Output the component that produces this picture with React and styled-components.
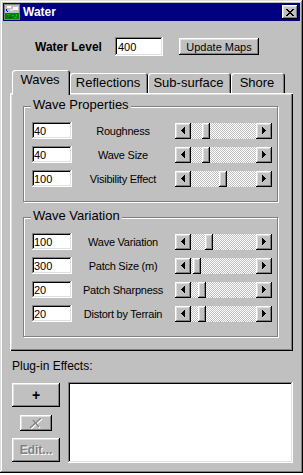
import React from 'react';
import styled, { createGlobalStyle } from 'styled-components';

const GlobalStyle = createGlobalStyle`
  html, body { margin: 0; padding: 0; background: #ffffff; }
  body { font-family: "Liberation Sans", Arial, sans-serif; color: #000; }
  * { box-sizing: border-box; }
`;

const raisedShadow = 'inset -1px -1px #000000, inset 1px 1px #ffffff, inset -2px -2px #808080, inset 2px 2px #dfdfdf';
const sunkenShadow = 'inset -1px -1px #ffffff, inset 1px 1px #808080, inset -2px -2px #dfdfdf, inset 2px 2px #000000';

const Window = styled.div`
  width: 303px;
  height: 473px;
  background: #c0c0c0;
  padding: 3px;
  box-shadow: inset -1px -1px #000000, inset 1px 1px #dfdfdf, inset -2px -2px #808080, inset 2px 2px #ffffff;
  display: flex;
  flex-direction: column;
`;

const TitleBar = styled.div`
  height: 18px;
  background: #000080;
  display: flex;
  align-items: center;
  padding: 0 2px 0 1px;
`;

const TitleText = styled.span`
  margin-left: 3px;
  color: #ffffff;
  font-weight: bold;
  font-size: 12px;
  line-height: 14px;
`;

const CloseButton = styled.button`
  margin-left: auto;
  width: 16px;
  height: 14px;
  padding: 0;
  border: none;
  background: #c0c0c0;
  box-shadow: ${raisedShadow};
  display: flex;
  align-items: center;
  justify-content: center;
`;

const Body = styled.div`
  display: flex;
  flex-direction: column;
  flex: 1;
`;

const WaterRow = styled.div`
  margin-top: 16px;
  height: 19px;
  display: flex;
  align-items: center;
  padding-left: 32px;
`;

const BoldLabel = styled.span`
  width: 80px;
  font-weight: bold;
  font-size: 12px;
`;

const Field = styled.input`
  width: ${p => p.$w}px;
  height: ${p => p.$h}px;
  border: none;
  outline: none;
  margin: 0;
  background: #ffffff;
  box-shadow: ${sunkenShadow};
  font-family: "Liberation Sans", Arial, sans-serif;
  font-size: 11px;
  padding: 0 0 0 ${p => p.$pl}px;
  color: #000;
`;

const PushButton = styled.button`
  width: ${p => p.$w}px;
  height: ${p => p.$h}px;
  margin: 0;
  padding: 0;
  border: none;
  background: #c0c0c0;
  box-shadow: ${raisedShadow};
  font-family: "Liberation Sans", Arial, sans-serif;
  font-size: ${p => p.$fs || 11}px;
  font-weight: ${p => (p.$bold ? 'bold' : 'normal')};
  color: ${p => (p.$disabled ? '#808080' : '#000')};
  text-shadow: ${p => (p.$disabled ? '1px 1px 0 #ffffff' : 'none')};
  display: flex;
  align-items: center;
  justify-content: center;
`;

const UpdateButton = styled(PushButton)`
  margin-left: 16px;
`;

const TabArea = styled.div`
  margin: 14px 7px 0 7px;
  display: flex;
  flex-direction: column;
`;

const TabStrip = styled.div`
  display: flex;
  align-items: flex-end;
  height: 23px;
  padding-left: 2px;
`;

const Tab = styled.div`
  width: ${p => p.$w}px;
  height: ${p => (p.$active ? 25 : 20)}px;
  margin-bottom: ${p => (p.$active ? -2 : 0)}px;
  position: relative;
  z-index: ${p => (p.$active ? 2 : 0)};
  background: #c0c0c0;
  border-radius: 3px 3px 0 0;
  box-shadow: inset 1px 1px #ffffff, inset -1px 0 #000000, inset -2px 0 #808080;
  font-size: 13px;
  line-height: 20px;
  text-align: center;
  padding-right: 2px;
`;

const Panel = styled.div`
  height: 258px;
  background: #c0c0c0;
  box-shadow: inset 1px 1px #ffffff, inset -1px -1px #000000, inset -2px -2px #808080, inset 2px 2px #dfdfdf;
  padding: 13px 15px 0 13px;
  display: flex;
  flex-direction: column;
  gap: 15px;
`;

const Group = styled.div`
  position: relative;
  border: 1px solid #808080;
  box-shadow: inset 1px 1px #ffffff, 1px 1px 0 #ffffff;
  padding: 15px 0 14px 8px;
  display: flex;
  flex-direction: column;
  gap: 7px;
`;

const Legend = styled.span`
  position: absolute;
  top: -10px;
  left: 7px;
  padding: 0 2px;
  background: #c0c0c0;
  font-size: 13px;
  line-height: 15px;
`;

const Row = styled.div`
  display: flex;
  align-items: center;
  height: 17px;
`;

const RowLabel = styled.span`
  width: 102px;
  text-align: center;
  font-size: 11px;
  letter-spacing: -0.25px;
  white-space: nowrap;
`;

const ScrollBar = styled.div`
  width: 97px;
  height: 16px;
  margin-left: 1px;
  display: flex;
`;

const ArrowButton = styled.div`
  width: 16px;
  height: 16px;
  background: #c0c0c0;
  box-shadow: ${raisedShadow};
  display: flex;
  align-items: center;
  justify-content: center;
`;

const Track = styled.div`
  flex: 1;
  height: 16px;
  display: flex;
  background: repeating-conic-gradient(#ffffff 0 25%, #c0c0c0 0 50%) 0 0 / 2px 2px;
`;

const Thumb = styled.div`
  width: 8px;
  height: 16px;
  margin-left: ${p => p.$offset}px;
  background: #c0c0c0;
  box-shadow: ${raisedShadow};
`;

const PluginLabel = styled.div`
  margin: 8px 0 0 9px;
  font-size: 12px;
  line-height: 14px;
`;

const BottomRow = styled.div`
  margin: 9px 0 0 9px;
  height: 81px;
  display: flex;
`;

const ButtonColumn = styled.div`
  width: 48px;
  padding-top: 1px;
  display: flex;
  flex-direction: column;
  align-items: center;
`;

const SmallButton = styled(PushButton)`
  margin: 8px 0 7px 0;
`;

const ListBox = styled.div`
  margin-left: 8px;
  width: 225px;
  height: 81px;
  background: #ffffff;
  box-shadow: ${sunkenShadow};
`;

const WaterIcon = () => (
  <svg width="16" height="16" viewBox="0 0 16 16" shapeRendering="crispEdges">
    <rect x="0" y="0" width="16" height="16" fill="#808080" />
    <rect x="1" y="1" width="14" height="8" fill="#c0c0c0" />
    <rect x="3" y="2" width="4" height="2" fill="#ffffff" />
    <rect x="9" y="3" width="5" height="3" fill="#ffffff" />
    <rect x="6" y="5" width="3" height="2" fill="#e0e0e0" />
    <rect x="1" y="9" width="14" height="6" fill="#008000" />
    <rect x="3" y="10" width="2" height="1" fill="#00c000" />
    <rect x="8" y="11" width="2" height="1" fill="#00c000" />
    <rect x="12" y="10" width="1" height="2" fill="#00c000" />
    <rect x="5" y="13" width="2" height="1" fill="#004000" />
    <rect x="10" y="13" width="3" height="1" fill="#00c000" />
    <rect x="2" y="5" width="1" height="2" fill="#0000ff" />
    <rect x="3" y="7" width="1" height="1" fill="#0000ff" />
  </svg>
);

const CloseGlyph = () => (
  <svg width="8" height="7" viewBox="0 0 8 7" shapeRendering="crispEdges">
    <path
      fill="#000"
      d="M0 0h2v1H0zM6 0h2v1H6zM1 1h2v1H1zM5 1h2v1H5zM2 2h4v1H2zM3 3h2v1H3zM2 4h4v1H2zM1 5h2v1H1zM5 5h2v1H5zM0 6h2v1H0zM6 6h2v1H6z"
    />
  </svg>
);

const LeftArrow = () => (
  <svg width="4" height="7" viewBox="0 0 4 7" shapeRendering="crispEdges">
    <path fill="#000" d="M3 0h1v7H3zM2 1h1v5H2zM1 2h1v3H1zM0 3h1v1H0z" />
  </svg>
);

const RightArrow = () => (
  <svg width="4" height="7" viewBox="0 0 4 7" shapeRendering="crispEdges">
    <path fill="#000" d="M0 0h1v7H0zM1 1h1v5H1zM2 2h1v3H2zM3 3h1v1H3z" />
  </svg>
);

const DeleteGlyph = () => (
  <svg width="14" height="11" viewBox="0 0 14 11">
    <g stroke="#ffffff" strokeWidth="1.2" fill="none">
      <line x1="2" y1="11" x2="13" y2="1" />
      <line x1="5" y1="3" x2="11" y2="10" />
    </g>
    <g stroke="#808080" strokeWidth="1.2" fill="none">
      <line x1="1" y1="10" x2="12" y2="0" />
      <line x1="4" y1="2" x2="10" y2="9" />
    </g>
  </svg>
);

const Slider = ({ offset }) => (
  <ScrollBar>
    <ArrowButton><LeftArrow /></ArrowButton>
    <Track><Thumb $offset={offset} /></Track>
    <ArrowButton><RightArrow /></ArrowButton>
  </ScrollBar>
);

const ParamRow = ({ value, label, offset }) => (
  <Row>
    <Field $w={40} $h={17} $pl={2} defaultValue={value} readOnly />
    <RowLabel>{label}</RowLabel>
    <Slider offset={offset} />
  </Row>
);

const waveProps = [
  { value: '40', label: 'Roughness', offset: 11 },
  { value: '40', label: 'Wave Size', offset: 11 },
  { value: '100', label: 'Visibility Effect', offset: 28 },
];

const waveVar = [
  { value: '100', label: 'Wave Variation', offset: 14 },
  { value: '300', label: 'Patch Size (m)', offset: 2 },
  { value: '20', label: 'Patch Sharpness', offset: 7 },
  { value: '20', label: 'Distort by Terrain', offset: 7 },
];

const tabs = [
  { label: 'Waves', w: 58, active: true },
  { label: 'Reflections', w: 78 },
  { label: 'Sub-surface', w: 83 },
  { label: 'Shore', w: 54 },
];

export default function App() {
  return (
    <>
      <GlobalStyle />
      <Window>
        <TitleBar>
          <WaterIcon />
          <TitleText>Water</TitleText>
          <CloseButton><CloseGlyph /></CloseButton>
        </TitleBar>
        <Body>
          <WaterRow>
            <BoldLabel>Water Level</BoldLabel>
            <Field $w={48} $h={19} $pl={3} defaultValue="400" readOnly />
            <UpdateButton $w={80} $h={17}>Update Maps</UpdateButton>
          </WaterRow>
          <TabArea>
            <TabStrip>
              {tabs.map(t => (
                <Tab key={t.label} $w={t.w} $active={t.active}>{t.label}</Tab>
              ))}
            </TabStrip>
            <Panel>
              <Group>
                <Legend>Wave Properties</Legend>
                {waveProps.map(r => <ParamRow key={r.label} {...r} />)}
              </Group>
              <Group>
                <Legend>Wave Variation</Legend>
                {waveVar.map(r => <ParamRow key={r.label} {...r} />)}
              </Group>
            </Panel>
          </TabArea>
          <PluginLabel>Plug-in Effects:</PluginLabel>
          <BottomRow>
            <ButtonColumn>
              <PushButton $w={48} $h={24} $fs={14} $bold>+</PushButton>
              <SmallButton $w={32} $h={16}><DeleteGlyph /></SmallButton>
              <PushButton $w={48} $h={24} $fs={12} $bold $disabled>Edit...</PushButton>
            </ButtonColumn>
            <ListBox />
          </BottomRow>
        </Body>
      </Window>
    </>
  );
}
